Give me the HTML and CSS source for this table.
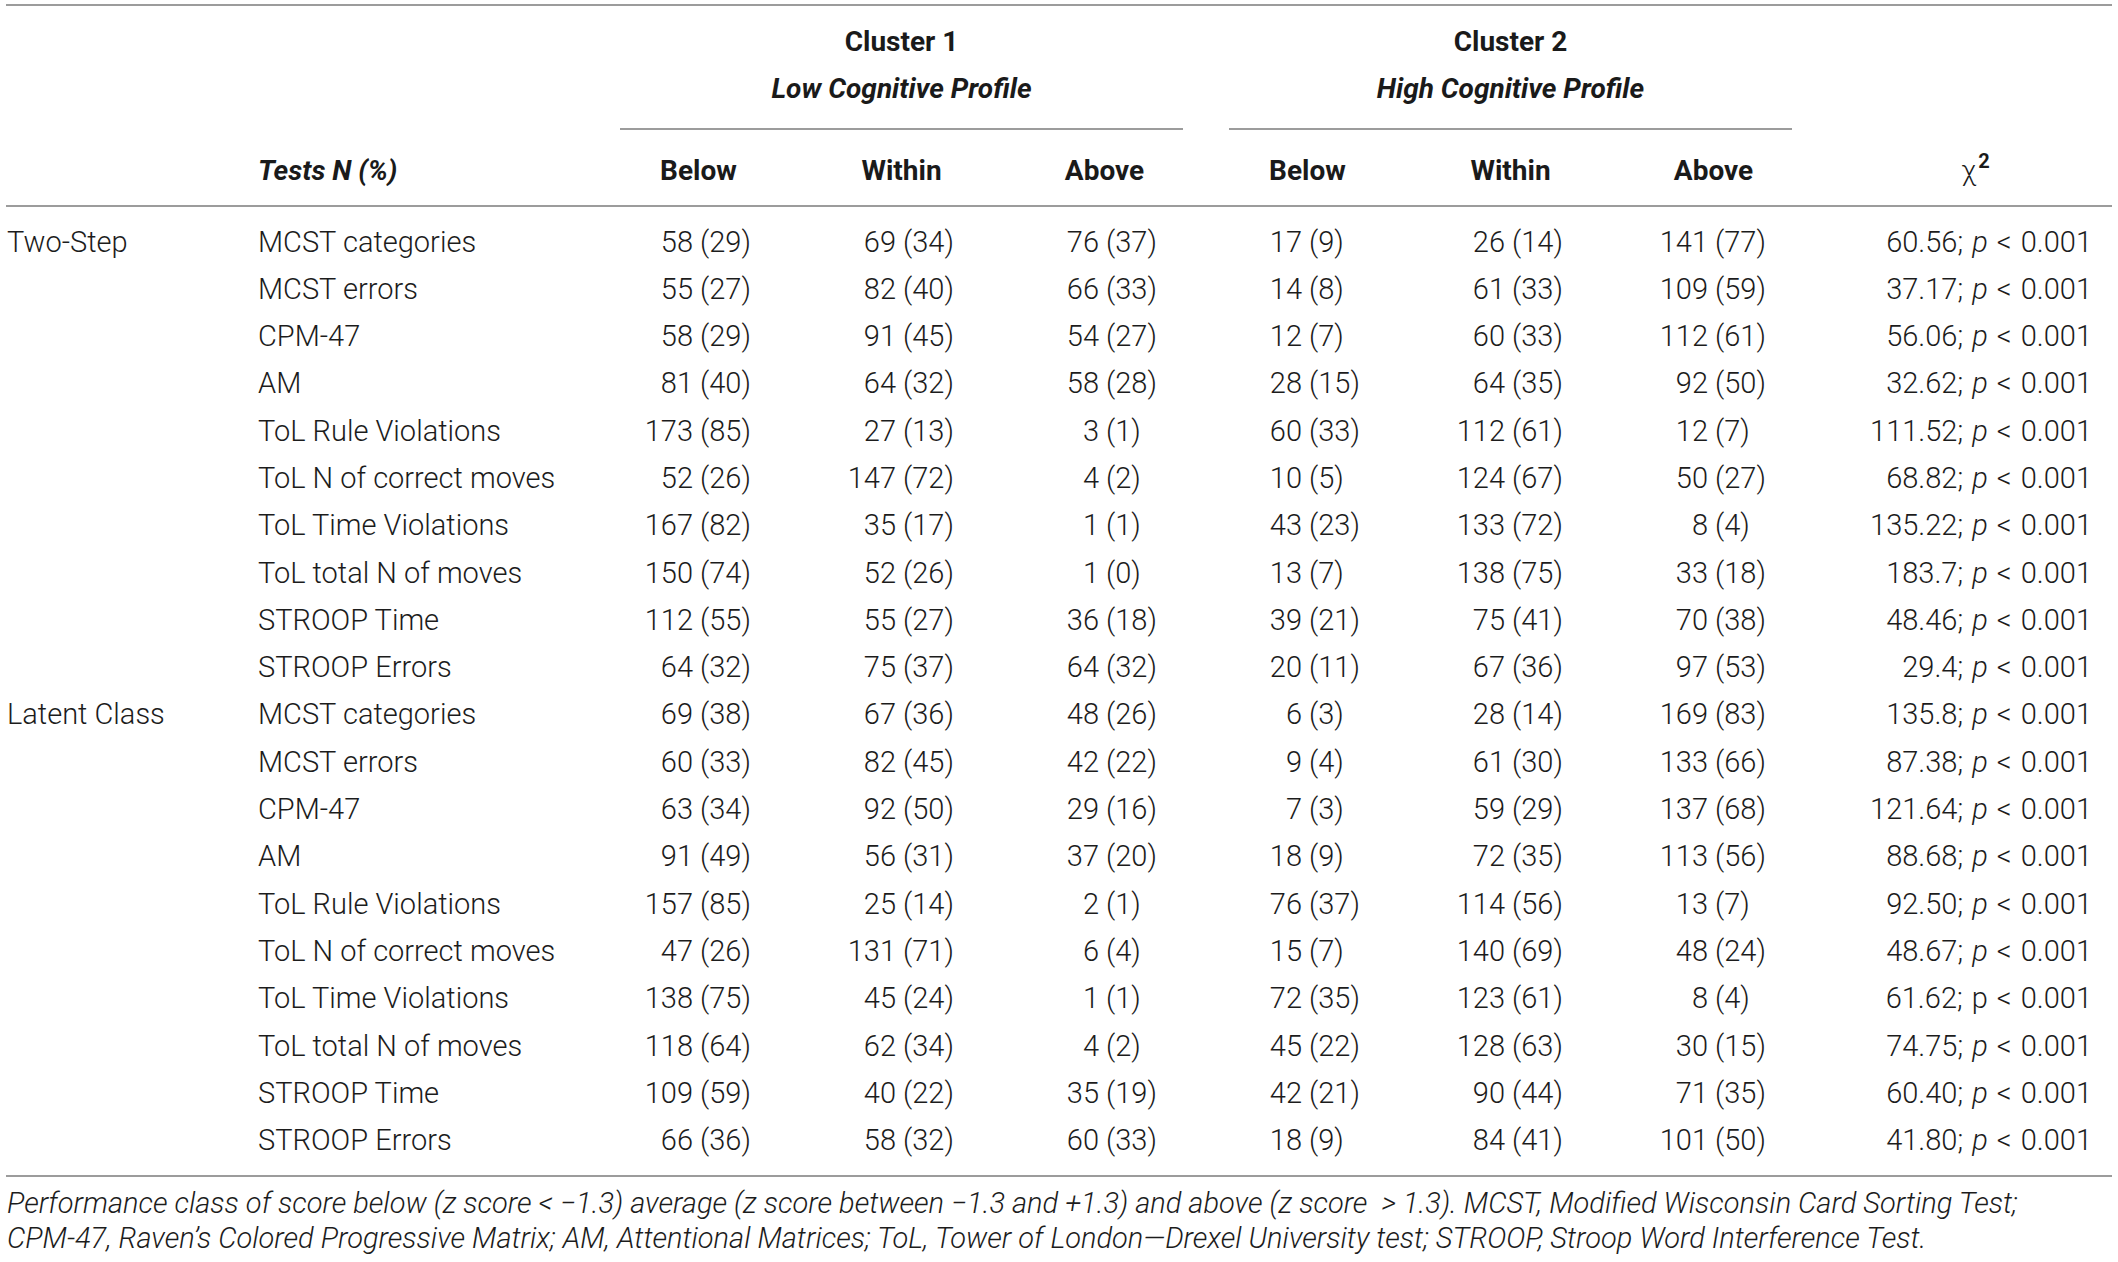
FILE: index.html
```html
<!DOCTYPE html>
<html lang="en">
<head>
    <meta charset="UTF-8">
    <meta name="viewport" content="width=device-width, initial-scale=1.0">
    <title>Performance class by cluster</title>
    <link rel="stylesheet" href="styles.css">
</head>
<body>

<table class="results">
    <colgroup>
        <col class="c-group">
        <col class="c-test">
        <col class="c-num"><col class="c-num"><col class="c-num">
        <col class="c-num"><col class="c-num"><col class="c-num">
        <col class="c-chi">
    </colgroup>
    <thead>
        <tr class="head-top">
            <th></th>
            <th></th>
            <th colspan="3" class="cluster">
                <div>Cluster 1</div>
                <div class="profile">Low Cognitive Profile</div>
                <div class="span-rule"></div>
            </th>
            <th colspan="3" class="cluster">
                <div>Cluster 2</div>
                <div class="profile">High Cognitive Profile</div>
                <div class="span-rule"></div>
            </th>
            <th></th>
        </tr>
        <tr class="head-cols">
            <th></th>
            <th class="tests">Tests N (%)</th>
            <th>Below</th>
            <th>Within</th>
            <th>Above</th>
            <th>Below</th>
            <th>Within</th>
            <th>Above</th>
            <th class="chi">χ<sup>2</sup></th>
        </tr>
    </thead>
    <tbody>
        <tr class="first">
            <td class="group">Two-Step</td>
            <td>MCST categories</td>
            <td class="num"><span class="n">58</span><span class="p">(29)</span></td>
            <td class="num"><span class="n">69</span><span class="p">(34)</span></td>
            <td class="num"><span class="n">76</span><span class="p">(37)</span></td>
            <td class="num"><span class="n">17</span><span class="p">(9)</span></td>
            <td class="num"><span class="n">26</span><span class="p">(14)</span></td>
            <td class="num"><span class="n">141</span><span class="p">(77)</span></td>
            <td class="stat">60.56; <em>p</em> &lt; 0.001</td>
        </tr>
        <tr>
            <td></td>
            <td>MCST errors</td>
            <td class="num"><span class="n">55</span><span class="p">(27)</span></td>
            <td class="num"><span class="n">82</span><span class="p">(40)</span></td>
            <td class="num"><span class="n">66</span><span class="p">(33)</span></td>
            <td class="num"><span class="n">14</span><span class="p">(8)</span></td>
            <td class="num"><span class="n">61</span><span class="p">(33)</span></td>
            <td class="num"><span class="n">109</span><span class="p">(59)</span></td>
            <td class="stat">37.17; <em>p</em> &lt; 0.001</td>
        </tr>
        <tr>
            <td></td>
            <td>CPM-47</td>
            <td class="num"><span class="n">58</span><span class="p">(29)</span></td>
            <td class="num"><span class="n">91</span><span class="p">(45)</span></td>
            <td class="num"><span class="n">54</span><span class="p">(27)</span></td>
            <td class="num"><span class="n">12</span><span class="p">(7)</span></td>
            <td class="num"><span class="n">60</span><span class="p">(33)</span></td>
            <td class="num"><span class="n">112</span><span class="p">(61)</span></td>
            <td class="stat">56.06; <em>p</em> &lt; 0.001</td>
        </tr>
        <tr>
            <td></td>
            <td>AM</td>
            <td class="num"><span class="n">81</span><span class="p">(40)</span></td>
            <td class="num"><span class="n">64</span><span class="p">(32)</span></td>
            <td class="num"><span class="n">58</span><span class="p">(28)</span></td>
            <td class="num"><span class="n">28</span><span class="p">(15)</span></td>
            <td class="num"><span class="n">64</span><span class="p">(35)</span></td>
            <td class="num"><span class="n">92</span><span class="p">(50)</span></td>
            <td class="stat">32.62; <em>p</em> &lt; 0.001</td>
        </tr>
        <tr>
            <td></td>
            <td>ToL Rule Violations</td>
            <td class="num"><span class="n">173</span><span class="p">(85)</span></td>
            <td class="num"><span class="n">27</span><span class="p">(13)</span></td>
            <td class="num"><span class="n">3</span><span class="p">(1)</span></td>
            <td class="num"><span class="n">60</span><span class="p">(33)</span></td>
            <td class="num"><span class="n">112</span><span class="p">(61)</span></td>
            <td class="num"><span class="n">12</span><span class="p">(7)</span></td>
            <td class="stat">111.52; <em>p</em> &lt; 0.001</td>
        </tr>
        <tr>
            <td></td>
            <td>ToL N of correct moves</td>
            <td class="num"><span class="n">52</span><span class="p">(26)</span></td>
            <td class="num"><span class="n">147</span><span class="p">(72)</span></td>
            <td class="num"><span class="n">4</span><span class="p">(2)</span></td>
            <td class="num"><span class="n">10</span><span class="p">(5)</span></td>
            <td class="num"><span class="n">124</span><span class="p">(67)</span></td>
            <td class="num"><span class="n">50</span><span class="p">(27)</span></td>
            <td class="stat">68.82; <em>p</em> &lt; 0.001</td>
        </tr>
        <tr>
            <td></td>
            <td>ToL Time Violations</td>
            <td class="num"><span class="n">167</span><span class="p">(82)</span></td>
            <td class="num"><span class="n">35</span><span class="p">(17)</span></td>
            <td class="num"><span class="n">1</span><span class="p">(1)</span></td>
            <td class="num"><span class="n">43</span><span class="p">(23)</span></td>
            <td class="num"><span class="n">133</span><span class="p">(72)</span></td>
            <td class="num"><span class="n">8</span><span class="p">(4)</span></td>
            <td class="stat">135.22; <em>p</em> &lt; 0.001</td>
        </tr>
        <tr>
            <td></td>
            <td>ToL total N of moves</td>
            <td class="num"><span class="n">150</span><span class="p">(74)</span></td>
            <td class="num"><span class="n">52</span><span class="p">(26)</span></td>
            <td class="num"><span class="n">1</span><span class="p">(0)</span></td>
            <td class="num"><span class="n">13</span><span class="p">(7)</span></td>
            <td class="num"><span class="n">138</span><span class="p">(75)</span></td>
            <td class="num"><span class="n">33</span><span class="p">(18)</span></td>
            <td class="stat">183.7; <em>p</em> &lt; 0.001</td>
        </tr>
        <tr>
            <td></td>
            <td>STROOP Time</td>
            <td class="num"><span class="n">112</span><span class="p">(55)</span></td>
            <td class="num"><span class="n">55</span><span class="p">(27)</span></td>
            <td class="num"><span class="n">36</span><span class="p">(18)</span></td>
            <td class="num"><span class="n">39</span><span class="p">(21)</span></td>
            <td class="num"><span class="n">75</span><span class="p">(41)</span></td>
            <td class="num"><span class="n">70</span><span class="p">(38)</span></td>
            <td class="stat">48.46; <em>p</em> &lt; 0.001</td>
        </tr>
        <tr>
            <td></td>
            <td>STROOP Errors</td>
            <td class="num"><span class="n">64</span><span class="p">(32)</span></td>
            <td class="num"><span class="n">75</span><span class="p">(37)</span></td>
            <td class="num"><span class="n">64</span><span class="p">(32)</span></td>
            <td class="num"><span class="n">20</span><span class="p">(11)</span></td>
            <td class="num"><span class="n">67</span><span class="p">(36)</span></td>
            <td class="num"><span class="n">97</span><span class="p">(53)</span></td>
            <td class="stat">29.4; <em>p</em> &lt; 0.001</td>
        </tr>
        <tr>
            <td class="group">Latent Class</td>
            <td>MCST categories</td>
            <td class="num"><span class="n">69</span><span class="p">(38)</span></td>
            <td class="num"><span class="n">67</span><span class="p">(36)</span></td>
            <td class="num"><span class="n">48</span><span class="p">(26)</span></td>
            <td class="num"><span class="n">6</span><span class="p">(3)</span></td>
            <td class="num"><span class="n">28</span><span class="p">(14)</span></td>
            <td class="num"><span class="n">169</span><span class="p">(83)</span></td>
            <td class="stat">135.8; <em>p</em> &lt; 0.001</td>
        </tr>
        <tr>
            <td></td>
            <td>MCST errors</td>
            <td class="num"><span class="n">60</span><span class="p">(33)</span></td>
            <td class="num"><span class="n">82</span><span class="p">(45)</span></td>
            <td class="num"><span class="n">42</span><span class="p">(22)</span></td>
            <td class="num"><span class="n">9</span><span class="p">(4)</span></td>
            <td class="num"><span class="n">61</span><span class="p">(30)</span></td>
            <td class="num"><span class="n">133</span><span class="p">(66)</span></td>
            <td class="stat">87.38; <em>p</em> &lt; 0.001</td>
        </tr>
        <tr>
            <td></td>
            <td>CPM-47</td>
            <td class="num"><span class="n">63</span><span class="p">(34)</span></td>
            <td class="num"><span class="n">92</span><span class="p">(50)</span></td>
            <td class="num"><span class="n">29</span><span class="p">(16)</span></td>
            <td class="num"><span class="n">7</span><span class="p">(3)</span></td>
            <td class="num"><span class="n">59</span><span class="p">(29)</span></td>
            <td class="num"><span class="n">137</span><span class="p">(68)</span></td>
            <td class="stat">121.64; <em>p</em> &lt; 0.001</td>
        </tr>
        <tr>
            <td></td>
            <td>AM</td>
            <td class="num"><span class="n">91</span><span class="p">(49)</span></td>
            <td class="num"><span class="n">56</span><span class="p">(31)</span></td>
            <td class="num"><span class="n">37</span><span class="p">(20)</span></td>
            <td class="num"><span class="n">18</span><span class="p">(9)</span></td>
            <td class="num"><span class="n">72</span><span class="p">(35)</span></td>
            <td class="num"><span class="n">113</span><span class="p">(56)</span></td>
            <td class="stat">88.68; <em>p</em> &lt; 0.001</td>
        </tr>
        <tr>
            <td></td>
            <td>ToL Rule Violations</td>
            <td class="num"><span class="n">157</span><span class="p">(85)</span></td>
            <td class="num"><span class="n">25</span><span class="p">(14)</span></td>
            <td class="num"><span class="n">2</span><span class="p">(1)</span></td>
            <td class="num"><span class="n">76</span><span class="p">(37)</span></td>
            <td class="num"><span class="n">114</span><span class="p">(56)</span></td>
            <td class="num"><span class="n">13</span><span class="p">(7)</span></td>
            <td class="stat">92.50; <em>p</em> &lt; 0.001</td>
        </tr>
        <tr>
            <td></td>
            <td>ToL N of correct moves</td>
            <td class="num"><span class="n">47</span><span class="p">(26)</span></td>
            <td class="num"><span class="n">131</span><span class="p">(71)</span></td>
            <td class="num"><span class="n">6</span><span class="p">(4)</span></td>
            <td class="num"><span class="n">15</span><span class="p">(7)</span></td>
            <td class="num"><span class="n">140</span><span class="p">(69)</span></td>
            <td class="num"><span class="n">48</span><span class="p">(24)</span></td>
            <td class="stat">48.67; <em>p</em> &lt; 0.001</td>
        </tr>
        <tr>
            <td></td>
            <td>ToL Time Violations</td>
            <td class="num"><span class="n">138</span><span class="p">(75)</span></td>
            <td class="num"><span class="n">45</span><span class="p">(24)</span></td>
            <td class="num"><span class="n">1</span><span class="p">(1)</span></td>
            <td class="num"><span class="n">72</span><span class="p">(35)</span></td>
            <td class="num"><span class="n">123</span><span class="p">(61)</span></td>
            <td class="num"><span class="n">8</span><span class="p">(4)</span></td>
            <td class="stat">61.62; p &lt; 0.001</td>
        </tr>
        <tr>
            <td></td>
            <td>ToL total N of moves</td>
            <td class="num"><span class="n">118</span><span class="p">(64)</span></td>
            <td class="num"><span class="n">62</span><span class="p">(34)</span></td>
            <td class="num"><span class="n">4</span><span class="p">(2)</span></td>
            <td class="num"><span class="n">45</span><span class="p">(22)</span></td>
            <td class="num"><span class="n">128</span><span class="p">(63)</span></td>
            <td class="num"><span class="n">30</span><span class="p">(15)</span></td>
            <td class="stat">74.75; <em>p</em> &lt; 0.001</td>
        </tr>
        <tr>
            <td></td>
            <td>STROOP Time</td>
            <td class="num"><span class="n">109</span><span class="p">(59)</span></td>
            <td class="num"><span class="n">40</span><span class="p">(22)</span></td>
            <td class="num"><span class="n">35</span><span class="p">(19)</span></td>
            <td class="num"><span class="n">42</span><span class="p">(21)</span></td>
            <td class="num"><span class="n">90</span><span class="p">(44)</span></td>
            <td class="num"><span class="n">71</span><span class="p">(35)</span></td>
            <td class="stat">60.40; <em>p</em> &lt; 0.001</td>
        </tr>
        <tr class="last">
            <td></td>
            <td>STROOP Errors</td>
            <td class="num"><span class="n">66</span><span class="p">(36)</span></td>
            <td class="num"><span class="n">58</span><span class="p">(32)</span></td>
            <td class="num"><span class="n">60</span><span class="p">(33)</span></td>
            <td class="num"><span class="n">18</span><span class="p">(9)</span></td>
            <td class="num"><span class="n">84</span><span class="p">(41)</span></td>
            <td class="num"><span class="n">101</span><span class="p">(50)</span></td>
            <td class="stat">41.80; <em>p</em> &lt; 0.001</td>
        </tr>
    </tbody>
</table>

<p class="note">Performance class of score below (z score &lt; −1.3) average (z score between −1.3 and +1.3) and above (z score &nbsp;&gt; 1.3). MCST, Modified Wisconsin Card Sorting Test;<br>CPM-47, Raven’s Colored Progressive Matrix; AM, Attentional Matrices; ToL, Tower of London—Drexel University test; STROOP, Stroop Word Interference Test.</p>

</body>
</html>
```

FILE: styles.css
```css
body { margin: 0; background: #fff; color: #1c1c1c; font-family: Roboto, "Liberation Sans", Arial, sans-serif; font-weight: 300; }

.results { border-collapse: collapse; table-layout: fixed; width: 2106px; margin: 4px 0 0 6px; border-top: 2px solid #9c9c9c; border-bottom: 2px solid #9c9c9c; font-size: 29px; }
.c-group { width: 252px; }
.c-test { width: 339px; }
.c-num { width: 203px; }
.c-chi { width: 297px; }

th { font-weight: 700; font-size: 28px; line-height: 47px; padding: 0; text-align: center; vertical-align: top; color: #1a1a1a; }
.head-top th { padding-top: 12px; }
.cluster .profile { font-style: italic; }
.span-rule { margin: 16px 23px 0; border-top: 2px solid #9c9c9c; }
.head-cols th { padding: 17px 0 11px; border-bottom: 2px solid #9c9c9c; }
.head-cols th.tests { text-align: left; font-style: italic; }
.head-cols th.chi { font-weight: 300; padding-left: 44px; padding-right: 20px; }
.chi sup { font-weight: 700; font-size: 20px; line-height: 0; vertical-align: 12px; margin-left: 2px; }

td { padding: 0; line-height: 47.3px; white-space: nowrap; vertical-align: top; }
td.group { padding-left: 1px; }
tr.first td { padding-top: 11.5px; }
tr.last td { padding-bottom: 10.5px; }
td.num { text-align: center; }
.num .n { display: inline-block; width: 49px; margin-right: 7px; text-align: right; }
.num .p { display: inline-block; width: 53px; text-align: left; }
td.stat { text-align: right; padding-right: 20px; word-spacing: 2px; }
td.stat em { font-style: italic; }

.note { margin: 9px 0 0 7px; font-size: 29px; line-height: 35px; font-style: italic; font-weight: 300; color: #1c1c1c; white-space: nowrap; }
```
